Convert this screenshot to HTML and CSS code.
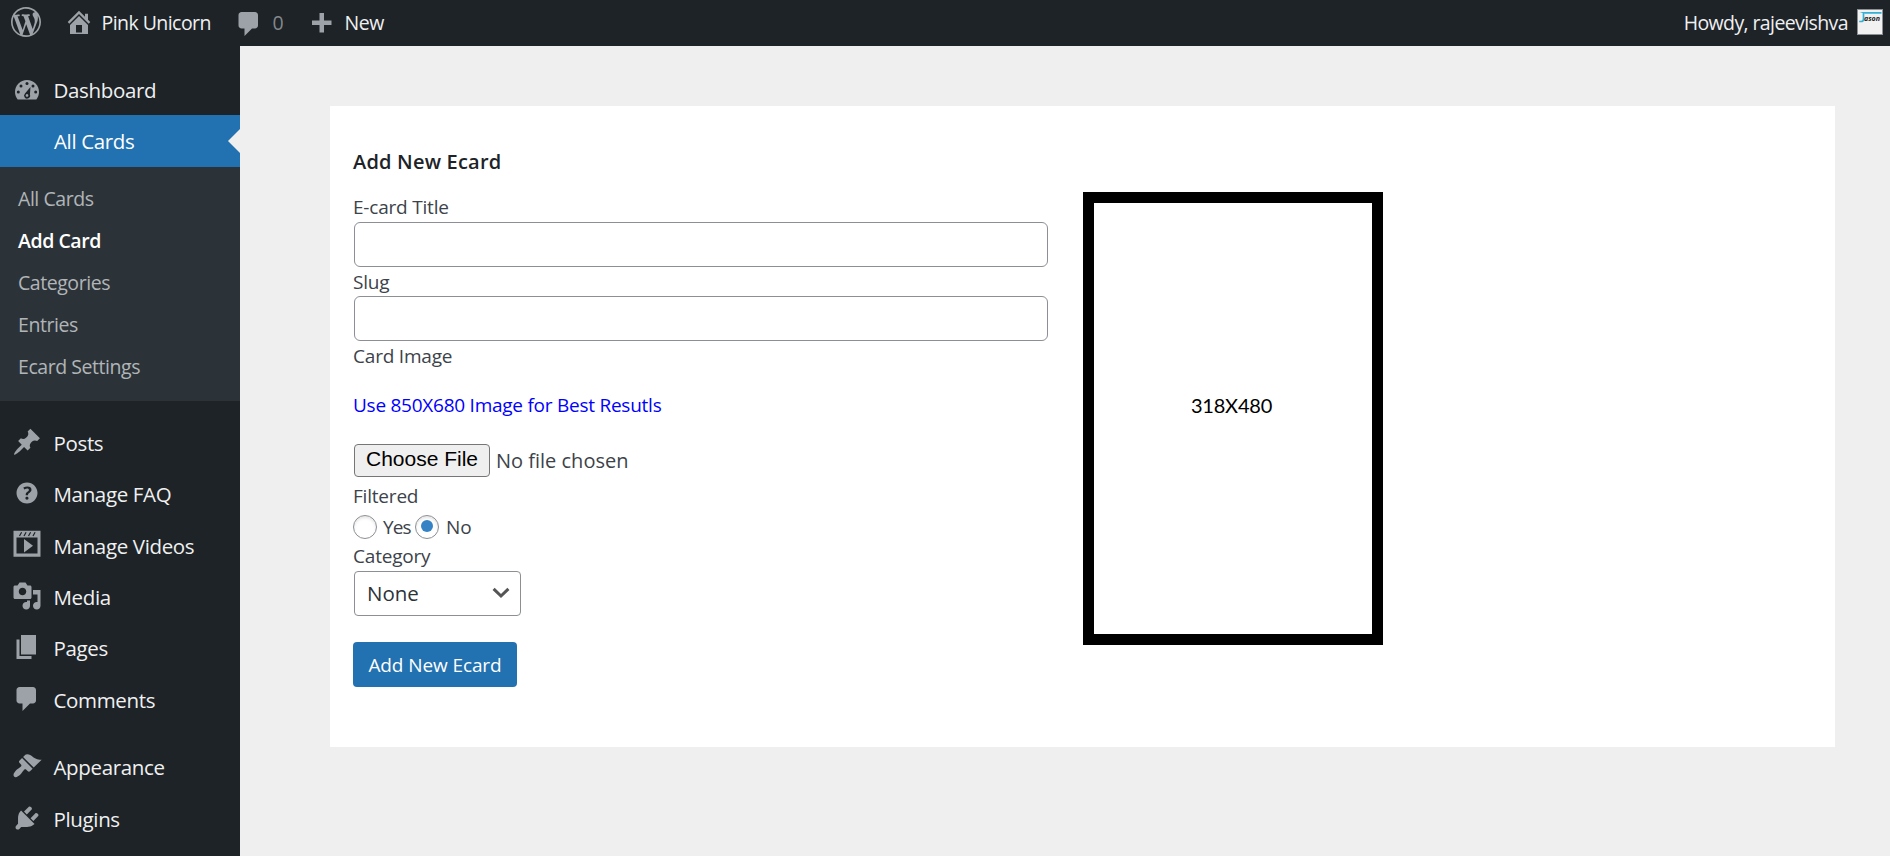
FILE: index.html
```html
<!DOCTYPE html>
<html lang="en">
<head>
<meta charset="utf-8">
<title>Add New Ecard</title>
<link rel="stylesheet" href="styles.css">
</head>
<body>
<header class="bar">
  <svg class="ic logo" viewBox="0 0 20 20"><path d="M20 10c0-5.51-4.49-10-10-10C4.48 0 0 4.49 0 10c0 5.52 4.48 10 10 10 5.51 0 10-4.48 10-10zM7.78 15.37L4.37 6.22c.55-.02 1.17-.08 1.17-.08.5-.06.44-1.13-.06-1.11 0 0-1.45.11-2.37.11-.18 0-.37 0-.58-.01C4.12 2.69 6.87 1.11 10 1.11c2.33 0 4.45.87 6.05 2.34-.68-.11-1.65.39-1.65 1.58 0 .74.45 1.36.9 2.1.35.61.55 1.36.55 2.46 0 1.49-1.4 5-1.4 5l-3.03-8.37c.54-.02.82-.17.82-.17.5-.05.44-1.25-.06-1.22 0 0-1.44.12-2.38.12-.87 0-2.33-.12-2.33-.12-.5-.03-.56 1.2-.06 1.22l.92.08 1.26 3.41zM17.41 10c.24-.64.74-1.87.43-4.25.7 1.29 1.05 2.71 1.05 4.25 0 3.29-1.73 6.24-4.4 7.78.97-2.59 1.94-5.2 2.92-7.78zM6.1 18.09C3.12 16.65 1.11 13.53 1.11 10c0-1.3.23-2.48.72-3.59C3.25 10.3 4.67 14.2 6.1 18.09zm4.03-6.63l2.58 6.98c-.86.29-1.76.45-2.71.45-.79 0-1.57-.11-2.29-.33.81-2.38 1.62-4.74 2.42-7.1z"/></svg>
  <div class="bar-item site"><svg class="ic" viewBox="0 0 20 20"><path fill-rule="evenodd" d="M16 8.5l1.53 1.53-1.06 1.06L10 4.6l-6.47 6.49-1.06-1.06L10 2.5l4 4v-2h2v4zm-6-2.46l6 5.99V18H4v-5.97zM12 17v-5H8v5h4z"/></svg><span>Pink Unicorn</span></div>
  <div class="bar-item count"><svg class="ic" viewBox="0 0 20 20"><path d="M5 2h9c1.1 0 2 .9 2 2v7c0 1.1-.9 2-2 2h-2l-5 5v-5H5c-1.1 0-2-.9-2-2V4c0-1.1.9-2 2-2z"/></svg><span>0</span></div>
  <div class="bar-item new"><svg class="ic" viewBox="0 0 20 20"><path d="M17 7v3h-5v5H9v-5H4V7h5V2h3v5h5z"/></svg><span>New</span></div>
  <div class="account"><span>Howdy, rajeevishva</span>
    <svg class="avatar" viewBox="0 0 26 26"><rect x=".5" y=".5" width="25" height="25" fill="#f1f1f1" stroke="#8c8f94"/><path d="M2.500 3h22v1.800H8" fill="#35b0d4"/><path d="M6.500 4v6q0 2.500-2.300 2.500h-2" fill="none" stroke="#35b0d4" stroke-width="1.700"/><text class="avatar-name" x="7" y="12" textLength="16" lengthAdjust="spacingAndGlyphs">ason</text></svg>
  </div>
</header>
<div class="page">
  <nav class="menu">
    <a class="item"><svg class="ic" viewBox="0 0 20 20"><path fill-rule="evenodd" d="M3.760 17h12.480c1.100-1.370 1.760-3.110 1.760-5 0-4.420-3.580-8-8-8s-8 3.580-8 8c0 1.890.66 3.630 1.760 5z"/><g class="cut"><circle cx="10" cy="6.300" r="1"/><circle cx="6" cy="8" r="1"/><circle cx="14" cy="8" r="1"/><circle cx="4.200" cy="12" r="1"/><circle cx="15.800" cy="12" r="1"/><path fill-rule="evenodd" d="M12.300 8.600l-.35 5.100a2 2 0 1 1-3.300-.7zM10 13.400a.9.9 0 1 0 .01 0z"/></g></svg><span>Dashboard</span></a>
    <a class="item active"><span>All Cards</span></a>
    <div class="sub">
      <a>All Cards</a>
      <a class="current">Add Card</a>
      <a>Categories</a>
      <a>Entries</a>
      <a>Ecard Settings</a>
    </div>
    <div class="group">
      <a class="item"><svg class="ic" viewBox="0 0 20 20"><path d="M10.440 3.020l1.820-1.820 6.360 6.350-1.830 1.820c-1.050-.68-2.480-.57-3.410.36l-.75.75c-.92.93-1.040 2.350-.35 3.410l-1.830 1.820-2.410-2.410-2.800 2.790c-.42.42-3.380 2.710-3.800 2.290s1.860-3.390 2.280-3.810l2.790-2.790L4.100 9.360l1.830-1.820c1.050.69 2.480.57 3.400-.36l.75-.75c.93-.92 1.050-2.350.36-3.410z"/></svg><span>Posts</span></a>
      <a class="item"><svg class="ic" viewBox="0 0 20 20"><path d="M17 10c0-3.870-3.140-7-7-7-3.870 0-7 3.130-7 7s3.130 7 7 7c3.860 0 7-3.130 7-7zm-6.300 1.480H9.140v-.43c0-.38.08-.7.24-.98s.46-.57.88-.89c.41-.29.68-.53.81-.71.14-.18.2-.39.2-.62 0-.25-.09-.44-.28-.58-.19-.13-.45-.19-.79-.19-.58 0-1.250.19-2 .57l-.64-1.280c.87-.49 1.800-.74 2.770-.74.81 0 1.450.2 1.920.58.48.39.71.91.71 1.550 0 .43-.09.8-.29 1.110-.19.32-.57.67-1.110 1.060-.38.28-.61.49-.71.63-.1.15-.15.34-.15.57v.35zm-1.470 2.740c-.18-.17-.27-.42-.27-.73 0-.33.08-.58.26-.75s.43-.25.77-.25c.32 0 .57.09.75.26s.27.42.27.74c0 .3-.09.55-.27.72-.18.18-.43.27-.75.27-.33 0-.58-.09-.76-.26z"/></svg><span>Manage FAQ</span></a>
      <a class="item"><svg class="ic" viewBox="0 0 20 20"><path fill-rule="evenodd" d="M1 .5h18v17.300H1zM3 5v10.600h14V5zM8 6v9l6-4.500z"/><path class="ticks" d="M5 4l1.400-2.500M8 4l1.400-2.500M11 4l1.400-2.500M14 4l1.400-2.500"/></svg><span>Manage Videos</span></a>
      <a class="item"><svg class="ic" viewBox="0 0 20 20"><path d="M13 11V4c0-.55-.45-1-1-1h-1.670L9 1H5L3.670 3H2c-.55 0-1 .45-1 1v7c0 .55.45 1 1 1h10c.55 0 1-.45 1-1zM7 4.500c1.380 0 2.500 1.120 2.500 2.500S8.380 9.500 7 9.500 4.500 8.380 4.500 7 5.620 4.500 7 4.500zM14 6h5v10.500c0 1.380-1.120 2.500-2.500 2.500S14 17.880 14 16.500s1.120-2.500 2.500-2.500c.17 0 .34.02.5.05V9h-3V6zm-4 8.050V13h2v3.500c0 1.380-1.120 2.500-2.500 2.500S7 17.880 7 16.500 8.120 14 9.500 14c.17 0 .34.02.5.05z" fill-rule="evenodd"/></svg><span>Media</span></a>
      <a class="item"><svg class="ic" viewBox="0 0 20 20"><path d="M6 15V2h10v13H6zm-1 1h8v2H3V5h2v11z"/></svg><span>Pages</span></a>
      <a class="item"><svg class="ic" viewBox="0 0 20 20"><path d="M5 2h9c1.100 0 2 .9 2 2v7c0 1.100-.9 2-2 2h-2l-5 5v-5H5c-1.100 0-2-.9-2-2V4c0-1.100.9-2 2-2z"/></svg><span>Comments</span></a>
    </div>
    <div class="group">
      <a class="item"><svg class="ic" viewBox="0 0 20 20"><path d="M14.480 11.060L7.410 3.990l1.500-1.500c.5-.56 2.300-.47 3.510.32 1.210.8 1.430 1.280 2.910 2.100 1.180.64 2.450 1.260 4.450.85zm-.71.71L6.700 4.700 4.930 6.470c-.39.39-.39 1.020 0 1.410l1.060 1.060c.39.39.39 1.030 0 1.420-.6.6-1.430 1.110-2.210 1.690-.35.26-.7.53-1.010.84C1.430 14.230.4 16.080 1.400 17.070c.99 1 2.840-.03 4.180-1.360.31-.31.58-.66.85-1.020.57-.78 1.080-1.610 1.690-2.210.39-.39 1.020-.39 1.410 0l1.060 1.060c.39.39 1.020.39 1.410 0z"/></svg><span>Appearance</span></a>
      <a class="item"><svg class="ic" viewBox="0 0 20 20"><path d="M13.110 4.360L9.870 7.600 8 5.730l3.240-3.240c.35-.34 1.050-.2 1.560.32.52.51.66 1.210.31 1.550zm-8 1.770l.91-1.120 9.010 9.010-1.190.84c-.71.71-2.630 1.160-3.820 1.160H6.140L4.900 17.260c-.59.59-1.540.59-2.120 0-.59-.58-.59-1.530 0-2.120l1.240-1.240v-3.880c0-1.130.4-3.190 1.090-3.890zm7.260 3.970l3.240-3.240c.34-.35 1.040-.21 1.550.31.52.51.66 1.210.31 1.550l-3.240 3.250z"/></svg><span>Plugins</span></a>
    </div>
  </nav>
  <main class="content">
    <section class="card">
      <form class="form">
        <h1>Add New Ecard</h1>
        <label class="first">E-card Title</label>
        <input class="field" type="text">
        <label>Slug</label>
        <input class="field" type="text">
        <label>Card Image</label>
        <p class="hint">Use 850X680 Image for Best Resutls</p>
        <div class="file"><button type="button" class="choose">Choose File</button><span>No file chosen</span></div>
        <label class="filtered">Filtered</label>
        <div class="radios"><i class="radio"></i><span class="yes">Yes</span><i class="radio on"></i><span class="no">No</span></div>
        <label class="category">Category</label>
        <div class="select"><span>None</span><svg class="chev" viewBox="0 0 18 12"><path d="M1.600 1.800L9 9l7.400-7.200"/></svg></div>
        <button type="button" class="submit">Add New Ecard</button>
      </form>
      <div class="frame">318X480</div>
    </section>
  </main>
</div>
</body>
</html>
```

FILE: styles.css
```css
* { box-sizing: border-box; }
body {
  margin: 0;
  height: 856px;
  overflow: hidden;
  background: #efefef;
  font-family: "Open Sans", "Noto Sans", sans-serif;
  font-size: 19px;
  color: #3c434a;
}
.ic { width: 30px; height: 30px; flex: none; fill: #9ca2a7; }

.bar {
  display: flex;
  align-items: center;
  height: 46px;
  padding: 0 7px 0 10.5px;
  background: #1d2327;
  color: #f0f0f1;
  font-size: 19.5px;
  line-height: 46px;
}
.bar .logo { margin-top: -2px; }
.bar-item { display: flex; align-items: center; height: 46px; }
.site { margin-left: 23px; width: 170px; gap: 8px; letter-spacing: -0.55px; }
.site .ic { margin-top: -2px; }
.count { width: 72px; gap: 9px; color: #84888b; }
.count .ic { margin-top: 2px; }
.new { gap: 9px; letter-spacing: -0.5px; }
.new .ic { margin-top: 4px; }
.account { display: flex; align-items: center; gap: 9px; margin-left: auto; letter-spacing: -0.6px; }
.avatar { width: 26px; height: 26px; margin-top: -2px; }
.avatar-name { font: italic bold 7.5px "Open Sans", sans-serif; fill: #222; letter-spacing: 0; }

.page { display: flex; height: 810px; }
.menu { width: 240px; flex: none; padding-top: 18px; background: #1d2327; overflow: hidden; }
.item {
  position: relative;
  display: flex;
  align-items: center;
  gap: 11.5px;
  height: 51.35px;
  padding-left: 12px;
  color: #f0f0f1;
  font-size: 20.5px;
  letter-spacing: -0.35px;
}
.item .ic { margin-top: -2px; }
.item .ic .cut { fill: #1d2327; }
.ticks { stroke: #1d2327; stroke-width: .8; }
.item.active { padding-left: 54px; background: #2271b1; color: #fff; }
.item.active::after {
  content: "";
  position: absolute;
  right: 0;
  top: 14px;
  border: 12px solid transparent;
  border-left: 0;
  border-right-color: #efefef;
}
.sub { padding: 11px 18px 12px; height: 234px; background: #2c3338; }
.sub a {
  display: block;
  height: 42.2px;
  line-height: 41px;
  color: #b1b5b8;
  font-size: 19.5px;
  letter-spacing: -0.45px;
}
.sub .current { color: #fff; font-weight: 600; }
.group { padding-top: 16.5px; }

.content { flex: 1; padding: 60px 55px 0 90px; }
.card { display: flex; height: 641px; background: #fff; padding-left: 23px; }
.form { display: flex; flex-direction: column; align-items: flex-start; width: 695px; padding-top: 41px; }
h1 { margin: 0; height: 30px; color: #1d2327; font-size: 20px; font-weight: 600; line-height: 29px; letter-spacing: 0.2px; }
label { height: 29px; line-height: 31px; font-size: 19px; letter-spacing: -0.2px; }
.first { height: 27px; margin-top: 18px; line-height: 25px; }
.field { width: 694px; height: 45px; margin: 0 0 0 1px; border: 1px solid #8c8f94; border-radius: 6px; background: #fff; }
.hint { margin: 20px 0 0; height: 30px; line-height: 30px; color: #00f; font-size: 19px; letter-spacing: -0.25px; }
.file { display: flex; align-items: center; gap: 6px; height: 33px; margin: 23.500px 0 0 1px; font-size: 20px; }
.choose {
  width: 136px;
  height: 33px;
  padding: 0 0 2px;
  border: 1px solid #767676;
  border-radius: 4px;
  background: #efefef;
  color: #000;
  font: 21px "Liberation Sans", Arial, sans-serif;
}
.filtered { height: 38px; line-height: 39px; }
.radios { display: flex; align-items: center; height: 24px; font-size: 19px; }
.radio {
  display: grid;
  place-items: center;
  width: 24px;
  height: 24px;
  border: 1px solid #8c8f94;
  border-radius: 50%;
  background: #fff;
  box-shadow: inset 0 2px 3px rgba(0, 0, 0, .1);
}
.radio.on::after { content: ""; width: 12px; height: 12px; margin-top: -2px; border-radius: 50%; background: #3582c4; }
.yes { width: 38px; padding-left: 6px; letter-spacing: -0.9px; }
.no { padding-left: 7px; }
.category { height: 32px; line-height: 35px; }
.select {
  display: flex;
  align-items: center;
  justify-content: space-between;
  width: 167px;
  height: 45px;
  margin-left: 1px;
  padding: 0 10px 0 12px;
  border: 1px solid #8c8f94;
  border-radius: 4px;
  color: #2c3338;
  font-size: 20.5px;
}
.chev { width: 18px; height: 12px; fill: none; stroke: #555; stroke-width: 3; }
.submit {
  width: 164px;
  height: 45px;
  margin-top: 26.500px;
  padding: 0;
  border: 0;
  border-radius: 4px;
  background: #2271b1;
  color: #fff;
  font: 19px "Open Sans", sans-serif;
  letter-spacing: -0.1px;
}
.frame {
  display: grid;
  place-items: center;
  width: 300px;
  height: 453px;
  margin: 86px 0 0 35px;
  padding-right: 3px;
  padding-bottom: 28px;
  border: 11px solid #000;
  color: #000;
  font: 20px Lato, sans-serif;
  letter-spacing: -0.2px;
}
```
